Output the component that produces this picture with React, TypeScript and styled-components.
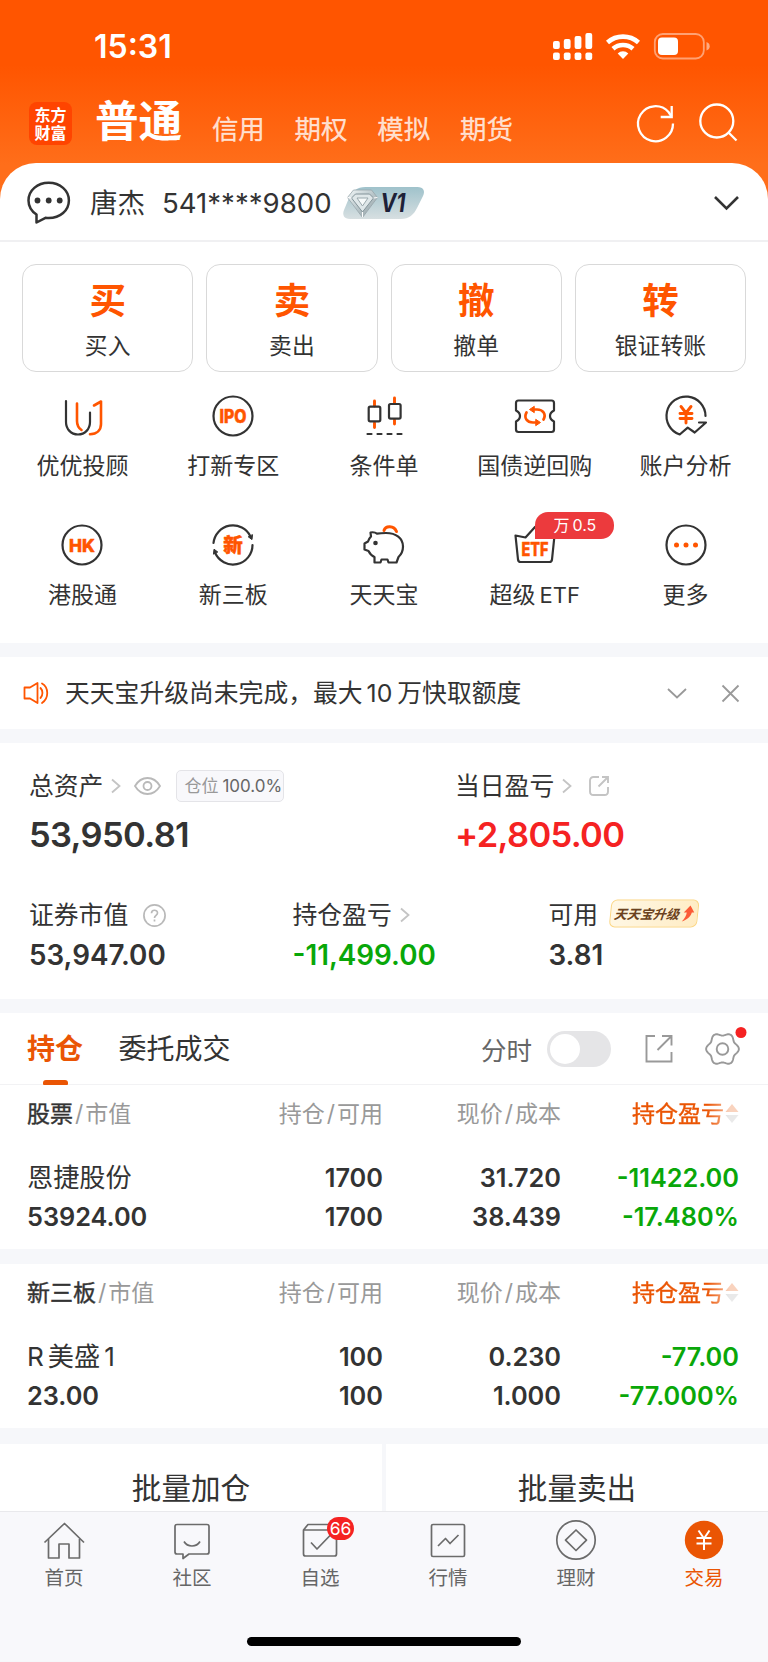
import React from 'react';
import styled, { createGlobalStyle } from 'styled-components';

const INK = '#333333';
const ORANGE = '#ff5500';
const BRAND = '#ea5504';
const GREEN = '#09a709';
const RED = '#f52222';
const GREY = '#999999';

const Global = createGlobalStyle`
  * { box-sizing: border-box; }
  body {
    margin: 0;
    background: #f8f8fb;
    color: ${INK};
    font-family: Inter, "Noto Sans CJK SC", sans-serif;
    -webkit-font-smoothing: antialiased;
  }
  svg { display: block; flex: none; overflow: visible; }
`;

const Screen = styled.div`
  width: 768px;
  height: 1662px;
  overflow: hidden;
  display: flex;
  flex-direction: column;
  background: #f6f7fa;
`;

/* ---------- header ---------- */

const Header = styled.header`
  height: 205px;
  margin-bottom: -42px;
  flex: none;
  background: linear-gradient(180deg, #ff5500 0, #ff5500 65px, #ff6e1a 165px);
  color: #fff;
`;

const StatusBar = styled.div`
  height: 93px;
  padding: 0 58px 0 94px;
  display: flex;
  align-items: center;
  justify-content: space-between;
`;

const Clock = styled.span`
  font-size: 32px;
  font-weight: 600;
  line-height: 40px;
`;

const NavBar = styled.div`
  height: 60px;
  padding: 0 29px;
  display: flex;
  align-items: center;
`;

const Logo = styled.div`
  width: 43px;
  height: 43px;
  border-radius: 8px;
  background: #ff4400;
  display: flex;
  flex-direction: column;
  align-items: center;
  justify-content: center;
  font: 700 16px/18px "Noto Sans CJK SC", sans-serif;
  padding-bottom: 1px;
`;

const NavTitle = styled.h1`
  margin: 0 0 3px 23px;
  font-size: 43.6px;
  font-weight: 700;
  line-height: 56px;
`;

const NavTab = styled.span`
  margin: 12px 0 0 29.7px;
  font-size: 26.5px;
  line-height: 34px;
  color: rgba(255, 255, 255, 0.8);
  -webkit-text-stroke: 0.4px rgba(255, 255, 255, 0.5);
`;

const NavActions = styled.div`
  margin-left: auto;
  display: flex;
  align-items: center;
  gap: 22px;
`;

/* ---------- account panel ---------- */

const Panel = styled.section`
  flex: none;
  height: 480px;
  background: #fff;
  border-radius: 36px 36px 0 0;
`;

const AccountRow = styled.div`
  height: 79px;
  padding: 2px 29px 0 27px;
  border-bottom: 2px solid #f0f0f2;
  display: flex;
  align-items: center;
`;

const AccountName = styled.span`
  margin-left: 19px;
  font-size: 27.5px;
  line-height: 36px;
`;

const AccountNo = styled.span`
  margin: 0 11px 0 17px;
  font-size: 27.6px;
  line-height: 36px;
`;

const Push = styled.span`
  margin-left: auto;
`;

const TradeGrid = styled.div`
  padding: 22px 22px 0;
  display: grid;
  grid-template-columns: repeat(4, 1fr);
  gap: 13px;
`;

const TradeCard = styled.div`
  height: 108px;
  border: 1.4px solid #d9d9d9;
  border-radius: 14px;
  display: flex;
  flex-direction: column;
  align-items: center;
`;

const TradeGlyph = styled.b`
  margin-top: 15px;
  font-size: 36.5px;
  line-height: 43px;
  font-weight: 700;
  color: ${ORANGE};
`;

const TradeLabel = styled.span`
  margin-top: 9px;
  font-size: 22.8px;
  line-height: 28px;
`;

const ToolGrid = styled.div`
  padding: 23px 7px 0;
  display: grid;
  grid-template-columns: repeat(5, 1fr);
  row-gap: 43px;
`;

const Tool = styled.div`
  position: relative;
  height: 86px;
  display: flex;
  flex-direction: column;
  align-items: center;
  justify-content: space-between;
`;

const ToolLabel = styled.span`
  font-size: 23px;
  line-height: 30px;
  white-space: nowrap;
`;

const Latin = styled.span`
  margin-left: 4px;
  font-size: 22px;
`;

const ToolBadge = styled.span`
  position: absolute;
  left: 76px;
  top: -12px;
  width: 79px;
  height: 26.5px;
  border-radius: 13px 13px 13px 0;
  background: #ec3a3d;
  color: #fff;
  font-size: 16px;
  line-height: 26.5px;
  text-align: center;
`;

const Gap = styled.span<{ $w?: number }>`
  display: inline-block;
  width: ${(p) => p.$w ?? 4}px;
`;

/* ---------- notice ---------- */

const Notice = styled.section`
  flex: none;
  height: 72px;
  margin: 14px 0;
  padding: 0 29px 0 23px;
  background: #fff;
  display: flex;
  align-items: center;
`;

const NoticeText = styled.span`
  margin-left: 16px;
  font-size: 24.8px;
  line-height: 32px;
  white-space: nowrap;
`;

/* ---------- assets ---------- */

const Assets = styled.section`
  flex: none;
  height: 256px;
  padding: 25px 29px 0;
  background: #fff;
`;

const AssetRow = styled.div<{ $cols: string; $top?: number }>`
  margin-top: ${(p) => p.$top ?? 0}px;
  display: grid;
  grid-template-columns: ${(p) => p.$cols};
`;

const AssetLabel = styled.div`
  height: 36px;
  display: flex;
  align-items: center;
  font-size: 24.8px;
  line-height: 36px;
  white-space: nowrap;
`;

const AssetValue = styled.div<{ $big?: boolean; $color?: string }>`
  margin-top: ${(p) => (p.$big ? 11 : 3)}px;
  font-size: ${(p) => (p.$big ? 34.5 : 27.8)}px;
  line-height: ${(p) => (p.$big ? 40 : 38)}px;
  letter-spacing: ${(p) => (p.$big ? -0.65 : 0)}px;
  font-weight: 600;
  color: ${(p) => p.$color ?? INK};
`;

const PositionTag = styled.span`
  margin-left: 15px;
  width: 108px;
  height: 32px;
  padding-left: 7px;
  border: 1px solid #e4e4e8;
  border-radius: 5px;
  background: #f8f8fb;
  color: ${GREY};
  font-size: 17px;
  line-height: 31px;
  display: flex;
  gap: 4px;
`;

const TagFigure = styled.span`
  color: #666;
`;

const UpgradeTag = styled.span`
  margin-left: 12px;
  width: 88px;
  height: 28px;
  border: 1.6px solid #fbd683;
  border-radius: 6px;
  background: linear-gradient(100deg, #fff8e6, #ffecc4);
  transform: skewX(-6deg) translateY(-1.5px);
  display: flex;
  align-items: center;
  justify-content: center;
  gap: 2px;
  font-size: 13px;
  font-weight: 700;
  font-style: italic;
  line-height: 24px;
  color: #6b4220;
`;

/* ---------- positions ---------- */

const Tabs = styled.nav`
  flex: none;
  height: 72px;
  margin-top: 14px;
  padding: 0 29px 0 27px;
  background: #fff;
  border-bottom: 1.5px solid #f2f2f4;
  display: flex;
  align-items: center;
`;

const Tab = styled.span<{ $active?: boolean }>`
  position: relative;
  height: 72px;
  margin-right: 35.5px;
  font-size: 28px;
  line-height: 72px;
  font-weight: ${(p) => (p.$active ? 700 : 400)};
  color: ${(p) => (p.$active ? BRAND : INK)};
  &::after {
    content: '';
    display: ${(p) => (p.$active ? 'block' : 'none')};
    position: absolute;
    left: 16px;
    bottom: 0;
    width: 25px;
    height: 5px;
    border-radius: 3px 3px 1px 1px;
    background: ${BRAND};
  }
`;

const TabTools = styled.div`
  margin-left: auto;
  display: flex;
  align-items: center;
`;

const ToggleLabel = styled.span`
  font-size: 25.5px;
  color: #666;
  margin-right: 15px;
`;

const Toggle = styled.span`
  width: 64px;
  height: 36px;
  padding: 3px;
  border-radius: 18px;
  background: #e5e5e7;
  margin-right: 34px;
`;

const Knob = styled.span`
  display: block;
  width: 30px;
  height: 30px;
  border-radius: 50%;
  background: #fff;
`;

const Table = styled.section<{ $top?: number }>`
  flex: none;
  height: 164px;
  margin-top: ${(p) => p.$top ?? 0}px;
  padding: 0 29px 0 27px;
  background: #fff;
`;

const HeadLine = styled.div`
  height: 57px;
  margin-bottom: 16.5px;
  display: grid;
  grid-template-columns: repeat(4, 178px);
  align-items: center;
  white-space: nowrap;
`;

const Line = styled(HeadLine)`
  height: 39px;
  margin-bottom: 0;
`;

const Head = styled.span<{ $left?: boolean }>`
  font-size: 23px;
  line-height: 30px;
  color: ${GREY};
  text-align: ${(p) => (p.$left ? 'left' : 'right')};
`;

const HeadName = styled.span`
  color: ${INK};
  -webkit-text-stroke: 0.4px ${INK};
`;

const SortHead = styled.span`
  display: flex;
  align-items: center;
  justify-content: flex-end;
  gap: 1px;
  font-size: 23px;
  line-height: 30px;
  color: ${BRAND};
  -webkit-text-stroke: 0.4px ${BRAND};
  mask-image: linear-gradient(90deg, #000 0, #000 82%, rgba(0, 0, 0, 0.4) 95%);
`;

const StockName = styled.span`
  font-size: 26.2px;
  line-height: 36px;
`;

const Figure = styled.span<{ $color?: string; $left?: boolean }>`
  font-size: 25.3px;
  font-weight: 600;
  line-height: 36px;
  text-align: ${(p) => (p.$left ? 'left' : 'right')};
  color: ${(p) => p.$color ?? INK};
`;

const Batch = styled.div`
  flex: none;
  height: 67px;
  margin-top: 16px;
  overflow: hidden;
  display: grid;
  grid-template-columns: 1fr 1fr;
  gap: 4px;
`;

const BatchButton = styled.div`
  height: 90px;
  background: #fff;
  text-align: center;
  font-size: 29.6px;
  line-height: 89px;
`;

/* ---------- bottom bar ---------- */

const BottomBar = styled.footer`
  flex: none;
  height: 150px;
  border-top: 1.5px solid #e9e9ec;
  background: #f8f8fb;
`;

const BottomTabs = styled.div`
  height: 125px;
  padding-top: 7.5px;
  display: grid;
  grid-template-columns: repeat(6, 1fr);
  align-items: start;
`;

const BottomTab = styled.div<{ $active?: boolean }>`
  position: relative;
  display: flex;
  flex-direction: column;
  align-items: center;
  gap: 4px;
  font-size: 19.5px;
  line-height: 28px;
  color: ${(p) => (p.$active ? BRAND : '#666')};
`;

const Count = styled.span`
  position: absolute;
  left: 71px;
  top: -3px;
  width: 27px;
  height: 23px;
  border-radius: 12px;
  background: ${RED};
  color: #fff;
  font-size: 17.5px;
  line-height: 23px;
  text-align: center;
`;

const HomeIndicator = styled.div`
  width: 274px;
  height: 9px;
  margin: 0 auto;
  border-radius: 5px;
  background: #000;
`;

/* ---------- icons ---------- */

const StatusIcons = () => (
  <svg width="158" height="28" viewBox="552 32 158 28" fill="#fff">
    {[0, 1, 2, 3].map((i) => (
      <g key={i}>
        <rect x={553 + i * 10.8} y={[40, 38, 35, 32][i]} width="6.8" height={[8, 10, 13, 16][i]} rx="2" />
        <rect x={553 + i * 10.8} y="51.5" width="6.8" height="7.5" rx="2" />
      </g>
    ))}
    <g fill="none" stroke="#fff" strokeWidth="4.6">
      <path d="M607.500 41.500a23.500 23.500 0 0 1 31 0" />
      <path d="M613 47.800a15 15 0 0 1 20 0" />
    </g>
    <path d="M623 58l-5.300-5.500a7.600 7.600 0 0 1 10.600 0z" />
    <rect x="654.800" y="33" width="49" height="24.500" rx="8" fill="none" stroke="#fff" strokeOpacity=".45" strokeWidth="1.800" />
    <rect x="658" y="36.500" width="20" height="17.500" rx="4" />
    <path d="M706.500 41v8.500c2-.6 3.200-2.300 3.200-4.250s-1.200-3.650-3.200-4.250z" fillOpacity=".5" />
  </svg>
);

const RefreshIcon = () => (
  <svg width="40" height="40" viewBox="635 102 40 40" fill="none" stroke="#fff" strokeWidth="2.300">
    <path d="M673 122.500a17.500 17.500 0 1 1-4.500-11.500l3 4.500" />
    <path d="M671.700 105v11h-11" />
  </svg>
);

const SearchIcon = () => (
  <svg width="42" height="40" viewBox="697 102 42 40" fill="none" stroke="#fff" strokeWidth="2.300">
    <circle cx="716.800" cy="120" r="16.500" />
    <path d="M728.500 131.500l8 8" />
  </svg>
);

const ChatIcon = () => (
  <svg width="44" height="44" viewBox="27 181 44 44" fill="none" stroke={INK} strokeWidth="2.500" strokeLinejoin="round">
    <path d="M36.500 214.500v8l9-4.700c1.300.2 2.400.2 3.200.2 11.400 0 20.200-7.600 20.200-17.600s-8.800-17.600-20.200-17.600-20.200 7.600-20.200 17.600c0 5.600 3 10.700 8 14.100z" />
    <g fill={INK} stroke="none">
      <circle cx="37.500" cy="200.500" r="2.900" />
      <circle cx="48.700" cy="200.500" r="2.900" />
      <circle cx="59.700" cy="200.500" r="2.900" />
    </g>
  </svg>
);

const LevelBadge = () => (
  <svg width="81" height="32" viewBox="343.500 187 81 32">
    <defs>
      <linearGradient id="lv" x1="0" y1="0" x2="0" y2="1">
        <stop offset="0" stopColor="#9fc2cb" />
        <stop offset="1" stopColor="#d7dfe1" />
      </linearGradient>
      <linearGradient id="gem" x1="0" y1="0" x2="1" y2="1">
        <stop offset="0" stopColor="#f2f7f8" />
        <stop offset=".5" stopColor="#b9c6ca" />
        <stop offset="1" stopColor="#8d9a9f" />
      </linearGradient>
    </defs>
    <path d="M366 187h52c6 0 8 4 5.500 9l-6 12c-3 6.500-8 11-16 11h-51c-6 0-8-4-6-9l5-12c3-7 8-11 16.500-11z" fill="url(#lv)" />
    <path d="M354 190h18l6 7.500-15 20-15-20z" fill="url(#gem)" stroke="#98a6ab" strokeWidth=".8" />
    <path d="M356 194h14l4 4-11 14-11-14z" fill="#dfe7e9" stroke="#84949a" strokeWidth="1" />
    <path d="M357.500 198h11l-5.500 8z" fill="#f7fafa" stroke="#9aa8ad" strokeWidth="1" />
    <path d="M348 197.500l4 .5M378 197.500l-4 .5M363 212v5.500" stroke="#fff" strokeWidth="1" />
    <text x="381" y="212" fontFamily="Inter" fontSize="25" fontWeight="700" fontStyle="italic" fill="#1d2137" textLength="25" lengthAdjust="spacingAndGlyphs">V1</text>
  </svg>
);

const ChevronDown = ({ w, h, color, sw }: { w: number; h: number; color: string; sw: number }) => (
  <svg width={w} height={h} viewBox={`0 0 ${w} ${h}`} fill="none" stroke={color} strokeWidth={sw}>
    <path d={`M1 1L${w / 2} ${h - 1.5}L${w - 1} 1`} />
  </svg>
);

const SideIcon = styled.svg<{ $l?: number; $r?: number }>`
  margin-left: ${(p) => p.$l ?? 0}px;
  margin-right: ${(p) => p.$r ?? 0}px;
`;

const ChevronRight = () => (
  <SideIcon $l={8} width="10" height="16" viewBox="0 0 10 16" fill="none" stroke="#c4c4c4" strokeWidth="1.800">
    <path d="M1 1.500L8.500 8L1 14.500" />
  </SideIcon>
);

const ToolSvg = ({ children }: { children: React.ReactNode }) => (
  <svg width="42" height="42" viewBox="-21 -21 42 42" fill="none" stroke={INK} strokeWidth="2.200" strokeLinecap="round" strokeLinejoin="round">
    {children}
  </svg>
);

const label = { fontFamily: 'Inter', fontWeight: 800, fill: ORANGE, stroke: ORANGE, strokeWidth: 0.5, textAnchor: 'middle' as const };

const AdvisorIcon = () => (
  <ToolSvg>
    <path d="M-16 -15V6c0 7 5 12.500 12 12.500S8 13 8 6V-3.500" />
    <g stroke={ORANGE} strokeWidth="2.600">
      <path d="M-5 -12.500V5c0 4 1.500 7 4.500 9" />
      <path d="M12 -10.500L19 -14.500V8c0 6-4 10-11 10.200" />
    </g>
  </ToolSvg>
);

const IpoIcon = () => (
  <ToolSvg>
    <circle r="19.500" />
    <text {...label} y="6.700" fontSize="18.500" textLength="27" lengthAdjust="spacingAndGlyphs">IPO</text>
  </ToolSvg>
);

const CandleIcon = () => (
  <ToolSvg>
    <g stroke={ORANGE} strokeWidth="2.900">
      <path d="M-9.500 -15v5M-9.500 7v4.500M10.500 -18v5M10.500 4v4" />
    </g>
    <rect x="-15.300" y="-9.300" width="11.600" height="14.600" rx="1.500" />
    <rect x="5" y="-12" width="11.600" height="14.600" rx="1.500" />
    <path d="M-16.500 18h34" strokeDasharray="4 6" />
  </ToolSvg>
);

const BondIcon = () => (
  <ToolSvg>
    <path d="M-16.500 -15.500h33c1.500 0 2.500 1 2.500 2.500v7.500c-2.500 1.300-4 3-4 5.500s1.500 4.200 4 5.500V13.500c0 1.500-1 2.500-2.500 2.500h-33c-1.500 0-2.500-1-2.500-2.500V5.500c2.500-1.300 4-3 4-5.500s-1.500-4.200-4-5.500V-13c0-1.500 1-2.500 2.500-2.500z" />
    <g stroke={ORANGE} strokeWidth="2.700">
      <path d="M-8.500 -3.500C-11.500 2 -8 6.500 -2 6.500H0" />
      <path d="M8.500 3.500C11.500 -2 8 -6.500 2 -6.500H0" />
      <path d="M1 3.500l4.500 3-4.500 3zM-1 -9.500l-4.500 3 4.500 3z" fill={ORANGE} strokeWidth="1" />
    </g>
  </ToolSvg>
);

const AnalysisIcon = () => (
  <ToolSvg>
    <path d="M19.500 0a19.500 19.500 0 1 0-25.800 18.500l8-6.800 7 4.800L20 6.500h-7" />
    <path d="M-5 -9.500L0 -3L5 -9.500M0 -3V7M-6 -2.500H6M-6 2.500H6" stroke={ORANGE} strokeWidth="2.900" />
  </ToolSvg>
);

const HkIcon = () => (
  <ToolSvg>
    <circle r="19.500" />
    <text {...label} y="6.500" fontSize="18" textLength="26" lengthAdjust="spacingAndGlyphs">HK</text>
  </ToolSvg>
);

const NeeqIcon = () => (
  <ToolSvg>
    <path d="M-19.500 -2A19.500 19.500 0 0 1 17.500 -8.500M19.500 0A19.500 19.500 0 0 1 -18 7.500" />
    <path d="M15.500 -8l3.500 2.600.5-4.600zM-19.500 8.800l.5-4.600 3.500 2.600z" fill={INK} strokeWidth="1" />
    <text {...label} fontFamily="Noto Sans CJK SC" fontWeight={900} y="6.700" fontSize="19.500">新</text>
  </ToolSvg>
);

const PiggyIcon = () => (
  <ToolSvg>
    <path d="M0 -14.500C1.500 -19.700 10 -19.700 12.500 -13.500" stroke={ORANGE} strokeWidth="3" />
    <path d="M-13.500 -12.500c3-.6 5 0 6.500 1.200 3-.6 6-.7 9-.7 10 0 17 5 17 13.500 0 4.500-1.800 8-4.500 10.500l-2 5.500H4.500l-1-3h-6l-1 3H-9.500v-5.500c-2.500-1-4.500-3-6-6l-4-1.500v-6l3.500-2c.5-2 1.500-3.500 3-5z" />
    <circle cx="-8.500" cy="-2" r="2.300" fill={INK} stroke="none" />
  </ToolSvg>
);

const EtfIcon = () => (
  <ToolSvg>
    <path d="M-19.500 -9.500L-9.500 -7.500L0 -18L9.500 -7.500L19.500 -9.500L17 14.500c-.2 1.500-1 2.500-2.500 2.500h-29c-1.500 0-2.300-1-2.500-2.500z" />
    <text {...label} y="10.700" fontSize="18.500" textLength="27" lengthAdjust="spacingAndGlyphs">ETF</text>
  </ToolSvg>
);

const MoreIcon = () => (
  <ToolSvg>
    <circle r="19.500" />
    <g fill={ORANGE} stroke="none">
      <circle cx="-9.500" r="2.500" />
      <circle r="2.500" />
      <circle cx="9.500" r="2.500" />
    </g>
  </ToolSvg>
);

const SpeakerIcon = () => (
  <svg width="26" height="24" viewBox="0 0 26 24" fill="none" stroke={ORANGE} strokeWidth="1.800" strokeLinejoin="round" strokeLinecap="round">
    <path d="M1.500 6.500h5.500l7.500-4.500v20L7 17.500H1.500z" />
    <path d="M17.500 7c2.600 2.500 2.600 7.500 0 10M19 2.500c7 4 7 15 0 19.500" />
  </svg>
);

const CloseIcon = () => (
  <SideIcon $l={35} width="17" height="17" viewBox="0 0 17 17" stroke={GREY} strokeWidth="1.800">
    <path d="M.5 .5l16 16M16.500 .5l-16 16" />
  </SideIcon>
);

const EyeIcon = () => (
  <SideIcon $l={13} width="27" height="18" viewBox="0 0 27 18" fill="none" stroke="#b9b9b9" strokeWidth="1.800">
    <path d="M1 9C4 4 8.500 1 13.500 1S23 4 26 9c-3 5-7.500 8-12.500 8S4 14 1 9z" />
    <circle cx="13.500" cy="9" r="4" />
  </SideIcon>
);

const ShareSmall = () => (
  <SideIcon $l={17} width="20" height="20" viewBox="0 0 20 20" fill="none" stroke="#c4c4c4" strokeWidth="1.900">
    <path d="M10 1H4.500C2.500 1 1 2.500 1 4.500v11C1 17.500 2.500 19 4.500 19h11c2 0 3.500-1.500 3.500-3.500V11" />
    <path d="M13 1h6v6M19 1L9.500 10.500" />
  </SideIcon>
);

const HelpIcon = () => (
  <SideIcon $l={15} width="23" height="23" viewBox="0 0 23 23" fill="none" stroke="#b9b9b9" strokeWidth="1.700">
    <circle cx="11.500" cy="11.500" r="10.600" />
    <path d="M8.500 9.300c0-4 6-4 6-.3 0 2.300-3 2.500-3 5M11.500 15.500v2" />
  </SideIcon>
);

const UpArrow = () => (
  <svg width="13" height="16" viewBox="0 0 13 16">
    <path d="M8.500 0L13 7H10.500C10 11 7 14 1.500 16C4 13 5.500 10 5.500 7H2.500z" fill="#fb5a36" />
  </svg>
);

const ShareIcon = () => (
  <SideIcon $r={33} width="28" height="28" viewBox="0 0 28 28" fill="none" stroke={GREY} strokeWidth="1.900">
    <path d="M10 1H1.500V26.500H26.500V17" />
    <path d="M17 1h9.500v9.500M26.500 1L12.500 15" />
  </SideIcon>
);

/* Six-lobed outline: the radius swells once every 60 degrees. */
const gearOutline =
  Array.from({ length: 72 }, (_, i) => {
    const a = (i * Math.PI) / 36;
    const r = 14.9 + 1.5 * Math.cos(6 * a);
    return `${i ? 'L' : 'M'}${(16.5 + r * Math.cos(a)).toFixed(2)} ${(17 + r * Math.sin(a)).toFixed(2)}`;
  }).join('') + 'z';

const GearIcon = () => (
  <svg width="33" height="34" viewBox="0 0 33 34" fill="none" stroke={GREY} strokeWidth="1.900" strokeLinejoin="round">
    <path d={gearOutline} />
    <circle cx="16.500" cy="17" r="5.800" />
    <circle cx="35" cy="0.500" r="5.500" fill={RED} stroke="none" />
  </svg>
);

const SortArrows = () => (
  <svg width="14" height="19" viewBox="0 0 14 19">
    <path d="M7 0l6.500 8H.5z" fill="#f0905c" />
    <path d="M7 19l6.500-8H.5z" fill="#c9c9c9" />
  </svg>
);

const BarSvg = ({ children }: { children: React.ReactNode }) => (
  <svg width="40" height="40" viewBox="-20 -20 40 40" fill="none" stroke="#6b6b6b" strokeWidth="1.700" strokeLinejoin="round">
    {children}
  </svg>
);

const barIcons = {
  home: (
    <BarSvg>
      <path d="M-19.500 2.500L.5 -16.500L20 2.500" />
      <path d="M-15.500 -1V18H-5V4H5V18H15.500V-1" />
    </BarSvg>
  ),
  social: (
    <BarSvg>
      <path d="M-15 -15.500h30c1 0 2 .8 2 2v25.500c0 1.200-1 2-2 2H-3l-6 4.500v-4.500h-6c-1 0-2-.8-2-2v-25.500c0-1.200 1-2 2-2z" />
      <path d="M-8 1.500c3.500 6 12.500 6 16 0" />
    </BarSvg>
  ),
  watch: (
    <BarSvg>
      <path d="M-16.500 -10l4.500-5.500H12l4.500 5.500V14c0 1-.8 2-2 2h-29c-1.200 0-2-1-2-2zM-16.500 -10h33" />
      <path d="M-9 2.500l6 6.500L10.500 -5" />
    </BarSvg>
  ),
  market: (
    <BarSvg>
      <rect x="-16.500" y="-15.500" width="33" height="32" rx="1.500" />
      <path d="M-10 6l7.500-7.500 4.500 5L10.500 -5" />
    </BarSvg>
  ),
  wealth: (
    <BarSvg>
      <circle r="19.200" />
      <path d="M0 -10L10.500 .2L0 10.500L-10.500 .2z" />
    </BarSvg>
  ),
  trade: (
    <BarSvg>
      <circle r="19.200" fill={BRAND} stroke="none" />
      <path d="M-5.500 -9.500L0 -1.500L5.500 -9.500M0 -1.500V10M-7.500 -2H7.500M-7.500 3.500H7.500" stroke="#fff" strokeWidth="2" />
    </BarSvg>
  ),
};

/* ---------- data ---------- */

const trades = [
  ['买', '买入'],
  ['卖', '卖出'],
  ['撤', '撤单'],
  ['转', '银证转账'],
];

const tools: { icon: React.ReactNode; name: React.ReactNode; badge?: React.ReactNode }[] = [
  { icon: <AdvisorIcon />, name: '优优投顾' },
  { icon: <IpoIcon />, name: '打新专区' },
  { icon: <CandleIcon />, name: '条件单' },
  { icon: <BondIcon />, name: '国债逆回购' },
  { icon: <AnalysisIcon />, name: '账户分析' },
  { icon: <HkIcon />, name: '港股通' },
  { icon: <NeeqIcon />, name: '新三板' },
  { icon: <PiggyIcon />, name: '天天宝' },
  { icon: <EtfIcon />, name: <>超级<Latin>ETF</Latin></>, badge: <>万<Gap $w={3} />0.5</> },
  { icon: <MoreIcon />, name: '更多' },
];

const bottomTabs: { key: keyof typeof barIcons; name: string; count?: number }[] = [
  { key: 'home', name: '首页' },
  { key: 'social', name: '社区' },
  { key: 'watch', name: '自选', count: 66 },
  { key: 'market', name: '行情' },
  { key: 'wealth', name: '理财' },
  { key: 'trade', name: '交易' },
];

const Slash = () => (
  <>
    <Gap $w={2} />/<Gap $w={2} />
  </>
);

interface Holding {
  group: string;
  name: React.ReactNode;
  value: string;
  top: string[];
  bottom: string[];
  gap?: number;
}

const HoldingTable = ({ group, name, value, top, bottom, gap }: Holding) => (
  <Table $top={gap}>
    <HeadLine>
      <Head $left><HeadName>{group}</HeadName><Slash />市值</Head>
      <Head>持仓<Slash />可用</Head>
      <Head>现价<Slash />成本</Head>
      <SortHead>持仓盈亏<SortArrows /></SortHead>
    </HeadLine>
    <Line>
      <StockName>{name}</StockName>
      <Figure>{top[0]}</Figure>
      <Figure>{top[1]}</Figure>
      <Figure $color={GREEN}>{top[2]}</Figure>
    </Line>
    <Line>
      <Figure $left>{value}</Figure>
      <Figure>{bottom[0]}</Figure>
      <Figure>{bottom[1]}</Figure>
      <Figure $color={GREEN}>{bottom[2]}</Figure>
    </Line>
  </Table>
);

export default function App() {
  return (
    <Screen>
      <Global />
      <Header>
        <StatusBar>
          <Clock>15:31</Clock>
          <StatusIcons />
        </StatusBar>
        <NavBar>
          <Logo>
            <span>东方</span>
            <span>财富</span>
          </Logo>
          <NavTitle>普通</NavTitle>
          {['信用', '期权', '模拟', '期货'].map((t) => (
            <NavTab key={t}>{t}</NavTab>
          ))}
          <NavActions>
            <RefreshIcon />
            <SearchIcon />
          </NavActions>
        </NavBar>
      </Header>

      <Panel>
        <AccountRow>
          <ChatIcon />
          <AccountName>唐杰</AccountName>
          <AccountNo>541****9800</AccountNo>
          <LevelBadge />
          <Push>
            <ChevronDown w={25} h={14} color={INK} sw={2.6} />
          </Push>
        </AccountRow>
        <TradeGrid>
          {trades.map(([glyph, name]) => (
            <TradeCard key={glyph}>
              <TradeGlyph>{glyph}</TradeGlyph>
              <TradeLabel>{name}</TradeLabel>
            </TradeCard>
          ))}
        </TradeGrid>
        <ToolGrid>
          {tools.map((t, i) => (
            <Tool key={i}>
              {t.icon}
              <ToolLabel>{t.name}</ToolLabel>
              {t.badge && <ToolBadge>{t.badge}</ToolBadge>}
            </Tool>
          ))}
        </ToolGrid>
      </Panel>

      <Notice>
        <SpeakerIcon />
        <NoticeText>
          天天宝升级尚未完成，最大<Gap $w={4} />10<Gap $w={5} />万快取额度
        </NoticeText>
        <Push>
          <ChevronDown w={20} h={11} color={GREY} sw={1.8} />
        </Push>
        <CloseIcon />
      </Notice>

      <Assets>
        <AssetRow $cols="426px 1fr">
          <div>
            <AssetLabel>
              总资产
              <ChevronRight />
              <EyeIcon />
              <PositionTag>
                仓位<TagFigure>100.0%</TagFigure>
              </PositionTag>
            </AssetLabel>
            <AssetValue $big>53,950.81</AssetValue>
          </div>
          <div>
            <AssetLabel>
              当日盈亏
              <ChevronRight />
              <ShareSmall />
            </AssetLabel>
            <AssetValue $big $color={RED}>+2,805.00</AssetValue>
          </div>
        </AssetRow>
        <AssetRow $cols="263.5px 256px 1fr" $top={42}>
          <div>
            <AssetLabel>
              证券市值
              <HelpIcon />
            </AssetLabel>
            <AssetValue>53,947.00</AssetValue>
          </div>
          <div>
            <AssetLabel>
              持仓盈亏
              <ChevronRight />
            </AssetLabel>
            <AssetValue $color={GREEN}>-11,499.00</AssetValue>
          </div>
          <div>
            <AssetLabel>
              可用
              <UpgradeTag>
                天天宝升级
                <UpArrow />
              </UpgradeTag>
            </AssetLabel>
            <AssetValue>3.81</AssetValue>
          </div>
        </AssetRow>
      </Assets>

      <Tabs>
        <Tab $active>持仓</Tab>
        <Tab>委托成交</Tab>
        <TabTools>
          <ToggleLabel>分时</ToggleLabel>
          <Toggle>
            <Knob />
          </Toggle>
          <ShareIcon />
          <GearIcon />
        </TabTools>
      </Tabs>

      <HoldingTable
        group="股票"
        name="恩捷股份"
        value="53924.00"
        top={['1700', '31.720', '-11422.00']}
        bottom={['1700', '38.439', '-17.480%']}
      />
      <HoldingTable
        gap={15}
        group="新三板"
        name={<>R<Gap $w={4} />美盛<Gap $w={4} />1</>}
        value="23.00"
        top={['100', '0.230', '-77.00']}
        bottom={['100', '1.000', '-77.000%']}
      />

      <Batch>
        <BatchButton>批量加仓</BatchButton>
        <BatchButton>批量卖出</BatchButton>
      </Batch>

      <BottomBar>
        <BottomTabs>
          {bottomTabs.map((t) => (
            <BottomTab key={t.key} $active={t.key === 'trade'}>
              {barIcons[t.key]}
              {t.name}
              {t.count && <Count>{t.count}</Count>}
            </BottomTab>
          ))}
        </BottomTabs>
        <HomeIndicator />
      </BottomBar>
    </Screen>
  );
}
